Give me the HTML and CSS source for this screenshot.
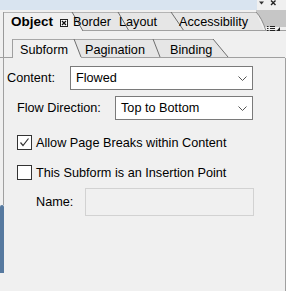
FILE: index.html
```html
<!DOCTYPE html>
<html>
<head>
<meta charset="utf-8">
<link rel="stylesheet" href="styles.css">
</head>
<body>
<div class="top">
  <div class="topblue"></div>
  <div class="topctl">
    <svg width="29" height="10" viewBox="0 0 29 10"><path d="M2 1.5 L7 1.5 L4.5 4.5 Z" fill="#333"/><path d="M14 0.5 L18.5 5 M18.5 0.5 L14 5" stroke="#222" stroke-width="1.4"/></svg>
  </div>
</div>
<div class="tabs1">
  <svg class="tablines" width="286" height="21" viewBox="0 0 286 21">
    <polygon points="72,2 256,2 264,21 83,21" fill="#e6e6e6"/>
    <path d="M256,0 L286,0 L286,17 L265,17 Q261,8 256,2 Z" fill="#c6c6c6"/>
    <path d="M3,2.5 H256" stroke="#b4b4b4" fill="none"/>
    <path d="M3.5,2 V21" stroke="#9a9a9a" fill="none"/>
    <path d="M72,2 L83,21 M118,2 L129,21 M171,2 L184,21" stroke="#6e6e6e" fill="none"/>
    <path d="M256,2 Q262,8 266,21" stroke="#8a8a8a" fill="none"/>
    <path d="M83,20.5 H286" stroke="#a0a0a0" fill="none"/>
  </svg>
  <div class="tab t-object"><span class="bold">Object</span><svg class="xicon" width="8" height="8" viewBox="0 0 8 8"><rect x="0.5" y="0.5" width="7" height="7" fill="#fff" stroke="#222"/><path d="M2 2 L6 6 M6 2 L2 6" stroke="#111" stroke-width="1.3"/></svg></div>
  <div class="tab t-border">Border</div>
  <div class="tab t-layout">Layout</div>
  <div class="tab t-access">Accessibility</div>
  <div class="tab t-menu"><svg width="14" height="6" viewBox="0 0 14 6"><path d="M0 1.5 H1.5 M3 1.5 H8 M0 3.5 H1.5 M3 3.5 H8 M0 5.5 H1.5 M3 5.5 H8" stroke="#222" fill="none"/><path d="M13 2 L13 6 L9.5 6 Z" fill="#222"/></svg></div>
</div>
<div class="tabs2">
  <svg class="tablines" width="286" height="27" viewBox="0 0 286 27">
    <polygon points="74,8 213,8 228,27 81,27" fill="#e6e6e6"/>
    <path d="M3.5,0 V27" stroke="#9a9a9a" fill="none"/>
    <path d="M12,8.5 H213" stroke="#a8a8a8" fill="none"/>
    <path d="M12.5,8 V27" stroke="#a0a0a0" fill="none"/>
    <path d="M74,8 L81,26 M153,8 L160,26 M213,8 L228,26" stroke="#6e6e6e" fill="none"/>
    <path d="M0,26.5 H12 M81,26.5 H285" stroke="#a0a0a0" fill="none"/>
    <path d="M284.5,26 V27" stroke="#a0a0a0" fill="none"/>
  </svg>
  <div class="tab2 t-pad"></div>
  <div class="tab2 t-subform">Subform</div>
  <div class="tab2 t-pagination">Pagination</div>
  <div class="tab2 t-binding">Binding</div>
</div>
<div class="page">
  <div class="edge">
    <div class="edgeline"></div>
    <div class="edgeblue"></div>
  </div>
  <div class="form">
    <div class="row">
      <div class="lbl lbl-content">Content:</div>
      <div class="select sel-content"><span>Flowed</span><svg class="chev" width="9" height="5" viewBox="0 0 9 5"><path d="M0.5 0.5 L4.5 4.5 L8.5 0.5" stroke="#555" fill="none"/></svg></div>
    </div>
    <div class="row row2">
      <div class="lbl lbl-flow">Flow Direction:</div>
      <div class="select sel-flow"><span>Top to Bottom</span><svg class="chev" width="9" height="5" viewBox="0 0 9 5"><path d="M0.5 0.5 L4.5 4.5 L8.5 0.5" stroke="#555" fill="none"/></svg></div>
    </div>
    <div class="cbrow cbrow1">
      <div class="cb"><svg width="13" height="13" viewBox="0 0 13 13"><path d="M2.5 6.5 L5 9.5 L10.5 2.5" stroke="#333" stroke-width="1.2" fill="none"/></svg></div>
      <span class="cbtext">Allow Page Breaks within Content</span>
    </div>
    <div class="cbrow cbrow2">
      <div class="cb"></div>
      <span class="cbtext">This Subform is an Insertion Point</span>
    </div>
    <div class="row namerow">
      <div class="lbl lbl-name">Name:</div>
      <div class="nameinput"></div>
    </div>
  </div>
</div>
</body>
</html>
```
FILE: styles.css
```css
html, body {
  margin: 0;
  padding: 0;
}
body {
  background: #f0f0f0;
  font-family: "Liberation Sans", Arial, sans-serif;
  font-size: 12.7px;
  color: #000;
  width: 286px;
  height: 291px;
  overflow: hidden;
}
.top {
  display: flex;
  height: 10px;
}
.topblue {
  width: 257px;
  background: #d9e4f0;
}
.topctl {
  flex: 1;
  display: flex;
}
.tabs1 {
  position: relative;
  display: flex;
  height: 21px;
}
.tabs2 {
  position: relative;
  display: flex;
  height: 27px;
}
.tablines {
  position: absolute;
  left: 0;
  top: 0;
  z-index: 0;
}
.tab, .tab2 {
  position: relative;
  z-index: 1;
  box-sizing: border-box;
  white-space: nowrap;
  line-height: 16px;
}
.tab {
  padding-top: 4px;
}
.tab2 {
  padding-top: 11px;
}
.bold {
  font-weight: bold;
  font-size: 13.5px;
}
.t-object {
  width: 72px;
  padding-left: 11px;
  display: flex;
  align-items: flex-start;
}
.xicon {
  margin-left: auto;
  margin-right: 4px;
  margin-top: 5px;
}
.t-border {
  width: 46px;
  padding-left: 1px;
}
.t-layout {
  width: 53px;
  padding-left: 1px;
}
.t-access {
  width: 91px;
  padding-left: 8px;
}
.t-menu {
  flex: 1;
  display: flex;
  justify-content: flex-end;
  padding-top: 15px;
  padding-right: 5px;
}
.t-pad {
  width: 12px;
}
.t-subform {
  width: 62px;
  padding-left: 8px;
}
.t-pagination {
  width: 79px;
  padding-left: 11px;
}
.t-binding {
  width: 60px;
  padding-left: 17px;
}
.page {
  display: flex;
  width: 285px;
  height: 233px;
  border-right: 1px solid #a0a0a0;
}
.edge {
  width: 4px;
  display: flex;
  flex-direction: column;
}
.edgeline {
  height: 147px;
  box-sizing: border-box;
  border-right: 1px solid #a0a0a0;
}
.edgeblue {
  height: 68px;
  width: 4px;
  background: #56799f;
  border-radius: 2px 2px 0 0;
}
.form {
  flex: 1;
  padding-top: 8px;
  display: flex;
  flex-direction: column;
}
.row {
  display: flex;
  align-items: center;
}
.lbl {
  box-sizing: border-box;
  white-space: nowrap;
}
.lbl-content {
  width: 66px;
  padding-left: 3px;
}
.lbl-flow {
  width: 111px;
  padding-left: 13px;
}
.lbl-name {
  width: 81px;
  padding-left: 32px;
}
.select {
  display: flex;
  align-items: center;
  justify-content: space-between;
  height: 24px;
  box-sizing: border-box;
  border: 1px solid #7a7a7a;
  background: #fff;
  padding: 0 5px;
}
.sel-content {
  width: 183px;
}
.sel-flow {
  width: 138px;
}
.row2 {
  margin-top: 6px;
}
.cbrow {
  display: flex;
  align-items: center;
  padding-left: 13px;
  height: 15px;
}
.cbrow1 {
  margin-top: 15px;
}
.cbrow2 {
  margin-top: 15px;
}
.cb {
  width: 15px;
  height: 15px;
  box-sizing: border-box;
  border: 1px solid #333;
  background: #fff;
  display: flex;
}
.cbtext {
  margin-left: 4px;
  white-space: nowrap;
}
.namerow {
  margin-top: 8px;
}
.nameinput {
  width: 169px;
  height: 28px;
  box-sizing: border-box;
  border: 1px solid #d2d2d2;
  background: #f0f0f0;
}
```
